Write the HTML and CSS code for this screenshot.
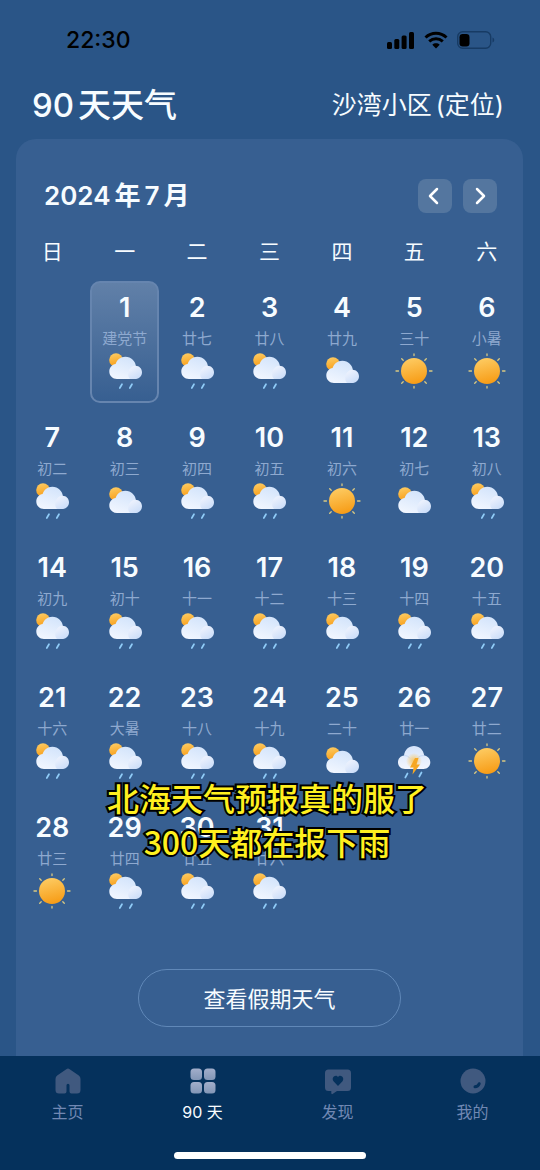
FILE: index.html
```html
<!DOCTYPE html>
<html lang="zh-CN">
<head>
<meta charset="utf-8">
<meta name="viewport" content="width=device-width, initial-scale=1">
<title>90 天天气</title>
<link rel="stylesheet" href="styles.css">
</head>
<body>
<svg class="sprite" width="0" height="0" aria-hidden="true">
  <defs>
    <linearGradient id="sunFill" x1="0.35" y1="0" x2="0.6" y2="1">
      <stop offset="0" stop-color="#fdcb62"/><stop offset="1" stop-color="#f79b14"/>
    </linearGradient>
    <linearGradient id="cloudFill" x1="0.7" y1="0" x2="0.3" y2="1">
      <stop offset="0" stop-color="#d3e4fb"/><stop offset="1" stop-color="#f1f6ff"/>
    </linearGradient>
    <linearGradient id="puffFill" x1="0" y1="0" x2="0.6" y2="1">
      <stop offset="0" stop-color="#f4f6fe"/><stop offset="1" stop-color="#ccdef9"/>
    </linearGradient>
    <linearGradient id="stormFill" x1="0.5" y1="0" x2="0.5" y2="1">
      <stop offset="0" stop-color="#d5e4fb"/><stop offset="1" stop-color="#f3f6fe"/>
    </linearGradient>
    <radialGradient id="glow">
      <stop offset="0" stop-color="#fbc049" stop-opacity="0.85"/><stop offset="1" stop-color="#fbc049" stop-opacity="0"/>
    </radialGradient>
    <linearGradient id="tileFill" x1="0" y1="0" x2="0" y2="1">
      <stop offset="0" stop-color="#a2aecb"/><stop offset="1" stop-color="#8296b6"/>
    </linearGradient>
    <symbol id="cloud" viewBox="0 0 44 40">
      <circle cx="13" cy="13" r="6.8" fill="url(#sunFill)"/>
      <path d="M14 32C9.600 32 6.300 28.800 6.300 24.500C6.300 20.500 9.100 17.500 12.600 17C14 12.900 17.600 9.800 22.300 9.800C28.300 9.800 32.600 14.300 33 19.800L33.500 32Z" fill="url(#cloudFill)"/>
      <path d="M27 32C25.600 30.500 25 28.700 25.300 26.300C25.800 22 28.900 18.700 32.500 18.700C36.200 18.700 39 21.500 39 25.300C39 29.100 36.200 32 32.500 32Z" fill="url(#puffFill)"/>
    </symbol>
    <symbol id="rain" viewBox="0 0 44 40">
      <use href="#cloud" y="-4" width="44" height="40"/>
      <path d="M19 33.200L16.800 37M29 33.200L26.800 37" stroke="#8fcbf7" stroke-width="1.700" stroke-linecap="round"/>
    </symbol>
    <symbol id="sun" viewBox="0 0 44 40">
      <circle cx="22" cy="20" r="13" fill="url(#sunFill)"/>
      <path d="M22 4.500V3M22 35.500V37M6.500 20h-2.500M37.500 20h2.500M11.200 9.200L9.700 7.700M32.800 9.200l1.500-1.500M11.200 30.800l-1.500 1.500M32.800 30.800l1.500 1.500" stroke="#d9c982" stroke-width="1.300" stroke-linecap="round"/>
    </symbol>
    <symbol id="storm" viewBox="0 0 44 40">
      <path d="M13 28C9 28 6 25.300 6 21.300C6 17.700 8.600 15 12 14.600C12.800 8.600 16.800 5 22 5C27.200 5 31.500 8.600 32.200 14.600C35.700 15.200 38.300 17.800 38.300 21.300C38.300 25.300 35.300 28 31.500 28Z" fill="url(#stormFill)"/>
      <path d="M12 14.600C14.700 14.500 16.700 15.500 18 17.500M25 17.500C26.700 15.300 29.200 14.400 32.200 14.600" stroke="#c6d8f5" fill="none"/>
      <circle cx="22" cy="20" r="8" fill="url(#glow)"/>
      <path d="M23 17L18 26.500H21.500L20.500 33.500L28 23.500H24.500L26.500 17Z" fill="#f6a723"/>
      <path d="M15.500 32.500L13.300 36.500M29.500 31.500L27.300 35.500" stroke="#8fcbf7" stroke-width="1.700" stroke-linecap="round"/>
    </symbol>
  </defs>
</svg>

<div class="app">
  <div class="status">
    <time class="clock">22:30</time>
    <div class="indicators" aria-hidden="true">
      <svg width="28" height="18" viewBox="0 0 28 18"><rect x="0" y="11" width="5" height="7" rx="1.500"/><rect x="7.300" y="8" width="5" height="10" rx="1.500"/><rect x="14.600" y="4.500" width="5" height="13.500" rx="1.500"/><rect x="22" y="1" width="5" height="17" rx="1.500"/></svg>
      <svg width="24" height="18" viewBox="0 0 24 18"><path d="M12 17.500L8.300 13.700C10.400 11.900 13.600 11.900 15.700 13.700Z"/><g fill="none" stroke="#000" stroke-width="3"><path d="M1.500 6.500C7.500 0.900 16.500 0.900 22.500 6.500"/><path d="M5.200 10.400C9.200 6.900 14.800 6.900 18.800 10.400"/></g></svg>
      <svg width="38" height="18" viewBox="0 0 38 18"><rect x="0.700" y="0.700" width="33" height="16.600" rx="5" fill="none" stroke="#173b64" stroke-width="1.400"/><rect x="2.500" y="3" width="10" height="12.500" rx="3.200"/><path d="M35.500 6.500C37.800 7.300 37.800 10.700 35.500 11.500Z" fill="#173b64"/></svg>
    </div>
  </div>

  <header class="top">
    <h1><span>90</span> <span>天天气</span></h1>
    <p class="place"><span>沙湾小区</span> <span>(定位)</span></p>
  </header>

  <main class="card">
    <div class="month">
      <h2><span>2024</span> <span>年</span> <span>7</span> <span>月</span></h2>
      <div class="pager">
        <button type="button" aria-label="上个月"><svg width="34" height="34" viewBox="0 0 34 34"><path d="M19 10L12 17L19 24"/></svg></button>
        <button type="button" aria-label="下个月"><svg width="34" height="34" viewBox="0 0 34 34"><path d="M14 10L21 17L14 24"/></svg></button>
      </div>
    </div>

    <table class="calendar">
      <thead>
        <tr><th scope="col">日</th><th scope="col">一</th><th scope="col">二</th><th scope="col">三</th><th scope="col">四</th><th scope="col">五</th><th scope="col">六</th></tr>
      </thead>
      <tbody>
        <tr>
          <td></td>
          <td><div class="day selected"><b>1</b><span>建党节</span><svg><use href="#rain"/></svg></div></td>
          <td><div class="day"><b>2</b><span>廿七</span><svg><use href="#rain"/></svg></div></td>
          <td><div class="day"><b>3</b><span>廿八</span><svg><use href="#rain"/></svg></div></td>
          <td><div class="day"><b>4</b><span>廿九</span><svg><use href="#cloud"/></svg></div></td>
          <td><div class="day"><b>5</b><span>三十</span><svg><use href="#sun"/></svg></div></td>
          <td><div class="day"><b>6</b><span>小暑</span><svg><use href="#sun"/></svg></div></td>
        </tr>
        <tr>
          <td><div class="day"><b>7</b><span>初二</span><svg><use href="#rain"/></svg></div></td>
          <td><div class="day"><b>8</b><span>初三</span><svg><use href="#cloud"/></svg></div></td>
          <td><div class="day"><b>9</b><span>初四</span><svg><use href="#rain"/></svg></div></td>
          <td><div class="day"><b>10</b><span>初五</span><svg><use href="#rain"/></svg></div></td>
          <td><div class="day"><b>11</b><span>初六</span><svg><use href="#sun"/></svg></div></td>
          <td><div class="day"><b>12</b><span>初七</span><svg><use href="#cloud"/></svg></div></td>
          <td><div class="day"><b>13</b><span>初八</span><svg><use href="#rain"/></svg></div></td>
        </tr>
        <tr>
          <td><div class="day"><b>14</b><span>初九</span><svg><use href="#rain"/></svg></div></td>
          <td><div class="day"><b>15</b><span>初十</span><svg><use href="#rain"/></svg></div></td>
          <td><div class="day"><b>16</b><span>十一</span><svg><use href="#rain"/></svg></div></td>
          <td><div class="day"><b>17</b><span>十二</span><svg><use href="#rain"/></svg></div></td>
          <td><div class="day"><b>18</b><span>十三</span><svg><use href="#rain"/></svg></div></td>
          <td><div class="day"><b>19</b><span>十四</span><svg><use href="#rain"/></svg></div></td>
          <td><div class="day"><b>20</b><span>十五</span><svg><use href="#rain"/></svg></div></td>
        </tr>
        <tr>
          <td><div class="day"><b>21</b><span>十六</span><svg><use href="#rain"/></svg></div></td>
          <td><div class="day"><b>22</b><span>大暑</span><svg><use href="#rain"/></svg></div></td>
          <td><div class="day"><b>23</b><span>十八</span><svg><use href="#rain"/></svg></div></td>
          <td><div class="day"><b>24</b><span>十九</span><svg><use href="#rain"/></svg></div></td>
          <td><div class="day"><b>25</b><span>二十</span><svg><use href="#cloud"/></svg></div></td>
          <td><div class="day"><b>26</b><span>廿一</span><svg><use href="#storm"/></svg></div></td>
          <td><div class="day"><b>27</b><span>廿二</span><svg><use href="#sun"/></svg></div></td>
        </tr>
        <tr>
          <td><div class="day"><b>28</b><span>廿三</span><svg><use href="#sun"/></svg></div></td>
          <td><div class="day"><b>29</b><span>廿四</span><svg><use href="#rain"/></svg></div></td>
          <td><div class="day"><b>30</b><span>廿五</span><svg><use href="#rain"/></svg></div></td>
          <td><div class="day"><b>31</b><span>廿六</span><svg><use href="#rain"/></svg></div></td>
          <td></td><td></td><td></td>
        </tr>
      </tbody>
    </table>

    <button type="button" class="holiday">查看假期天气</button>
  </main>

  <p class="caption">北海天气预报真的服了<br>300天都在报下雨</p>

  <nav class="tabs">
    <div class="tab-row">
      <a href="#home"><svg width="28" height="28" viewBox="0 0 28 28"><path d="M12.300 2.200Q14 0.900 15.700 2.200L24.800 8.600Q26.500 9.900 26.500 12V23Q26.500 26.500 23 26.500H17.500Q15.500 26.500 15.500 24.500V18.300Q15.500 16.800 14 16.800Q12.500 16.800 12.500 18.300V24.500Q12.500 26.500 10.500 26.500H5Q1.500 26.500 1.500 23V12Q1.500 9.900 3.200 8.600Z" fill="#40597f"/></svg><span>主页</span></a>
      <a href="#days" class="active" aria-current="page"><svg width="28" height="28" viewBox="0 0 28 28" fill="url(#tileFill)"><rect x="1.500" y="1.500" width="11.500" height="11.500" rx="3.500"/><rect x="15" y="1.500" width="11.500" height="11.500" rx="3.500"/><rect x="1.500" y="15" width="11.500" height="11.500" rx="3.500"/><rect x="15" y="15" width="11.500" height="11.500" rx="3.500"/></svg><span>90 天</span></a>
      <a href="#discover"><svg width="28" height="28" viewBox="0 0 28 28"><path d="M4.500 2.500H23.500Q27 2.500 27 6V20.500Q27 24 23.500 24H13L8.500 27Q7.300 27.500 7.300 26V24H4.500Q1 24 1 20.500V6Q1 2.500 4.500 2.500Z" fill="#40597f"/><path d="M14 19L9.500 14.200C6.800 10.500 11.800 6.500 14 10C16.200 6.500 21.200 10.500 18.500 14.200Z" fill="#05315c"/></svg><span>发现</span></a>
      <a href="#me"><svg width="28" height="28" viewBox="0 0 28 28"><circle cx="14" cy="14" r="12.500" fill="#40597f"/><path d="M16 19.800Q19 19.600 20.200 16.700" fill="none" stroke="#05315c" stroke-width="3" stroke-linecap="round"/></svg><span>我的</span></a>
    </div>
    <div class="home-bar"></div>
  </nav>
</div>
</body>
</html>
```

FILE: styles.css
```css
* {
  box-sizing: border-box;
}

body {
  margin: 0;
  background: #2a5587;
  color: #f7fcff;
  font-family: Inter, "Noto Sans CJK SC", sans-serif;
}

h1,
h2,
p {
  margin: 0;
}

button {
  padding: 0;
  color: inherit;
  font: inherit;
}

.sprite {
  position: absolute;
}

.app {
  position: relative;
  display: flex;
  flex-direction: column;
  min-height: 100vh;
}

.status {
  display: flex;
  align-items: center;
  justify-content: space-between;
  height: 80px;
  padding: 0 45px 0 66px;
}

.clock {
  color: #000;
  font-size: 23px;
  font-weight: 500;
}

.indicators {
  display: flex;
  gap: 9px;
}

.top {
  display: flex;
  align-items: center;
  justify-content: space-between;
  height: 50px;
  padding: 0 36px 0 32px;
}

h1,
h2,
.place {
  display: flex;
  gap: 4px;
}

h1 {
  font-size: 33px;
  font-weight: 500;
  line-height: 50px;
}

.place {
  font-size: 25px;
  font-weight: 400;
  line-height: 50px;
}

.card {
  display: flex;
  flex: 1;
  flex-direction: column;
  margin: 9px 17px 0 16px;
  padding: 40px 0 29px;
  border-radius: 20px 20px 0 0;
  background: #375f91;
}

.month {
  display: flex;
  align-items: center;
  justify-content: space-between;
  padding: 0 26px 0 28px;
}

h2 {
  font-size: 26px;
  font-weight: 600;
  line-height: 34px;
}

.pager {
  display: flex;
  gap: 11px;
}

.pager button {
  width: 34px;
  height: 34px;
  border: 0;
  border-radius: 8px;
  background: #54769f;
}

.pager svg {
  display: block;
  fill: none;
  stroke: #fff;
  stroke-width: 2.5;
  stroke-linecap: round;
  stroke-linejoin: round;
}

.calendar {
  width: 100%;
  margin-top: 23px;
  border-collapse: collapse;
  table-layout: fixed;
}

th {
  height: 45px;
  padding: 0 0 13px;
  font-size: 21px;
  font-weight: 400;
  line-height: 32px;
}

td {
  padding: 0 2px 8px;
}

.day {
  display: flex;
  flex-direction: column;
  align-items: center;
  height: 122px;
  padding-top: 9px;
  border: 1px solid transparent;
  border-radius: 10px;
}

.day b {
  font-size: 27px;
  font-weight: 600;
  line-height: 34px;
}

.day span {
  margin-top: 4px;
  color: #8ea9cf;
  font-size: 15px;
  line-height: 20px;
}

.day svg {
  width: 44px;
  height: 40px;
  margin-top: 2px;
}

.selected {
  border: 2px solid #6685af;
  padding-top: 8px;
  background: linear-gradient(#6180a8, #375f91);
}

.holiday {
  width: 52%;
  height: 58px;
  margin: 38px auto 0;
  padding-bottom: 3px;
  border: 1px solid #6088b8;
  border-radius: 29px;
  background: transparent;
  font-size: 22px;
}

.caption {
  position: absolute;
  top: 775px;
  right: 6px;
  left: 0;
  color: #fff01f;
  font-family: "Noto Sans CJK SC", sans-serif;
  font-size: 32px;
  font-weight: 500;
  line-height: 44px;
  text-align: center;
  -webkit-text-stroke: 4px #000;
  paint-order: stroke fill;
}

.tabs {
  position: sticky;
  bottom: 0;
  height: 114px;
  padding-top: 11px;
  background: #05315c;
}

.tab-row {
  display: grid;
  grid-template-columns: repeat(4, 1fr);
}

.tabs a {
  display: flex;
  flex-direction: column;
  gap: 5px;
  align-items: center;
  color: #7188b3;
  font-size: 16px;
  line-height: 24px;
  text-decoration: none;
}

.tabs .active {
  color: #f7fcff;
}

.home-bar {
  width: 192px;
  height: 7px;
  margin: 28px auto 0;
  border-radius: 4px;
  background: #fff;
}
```
